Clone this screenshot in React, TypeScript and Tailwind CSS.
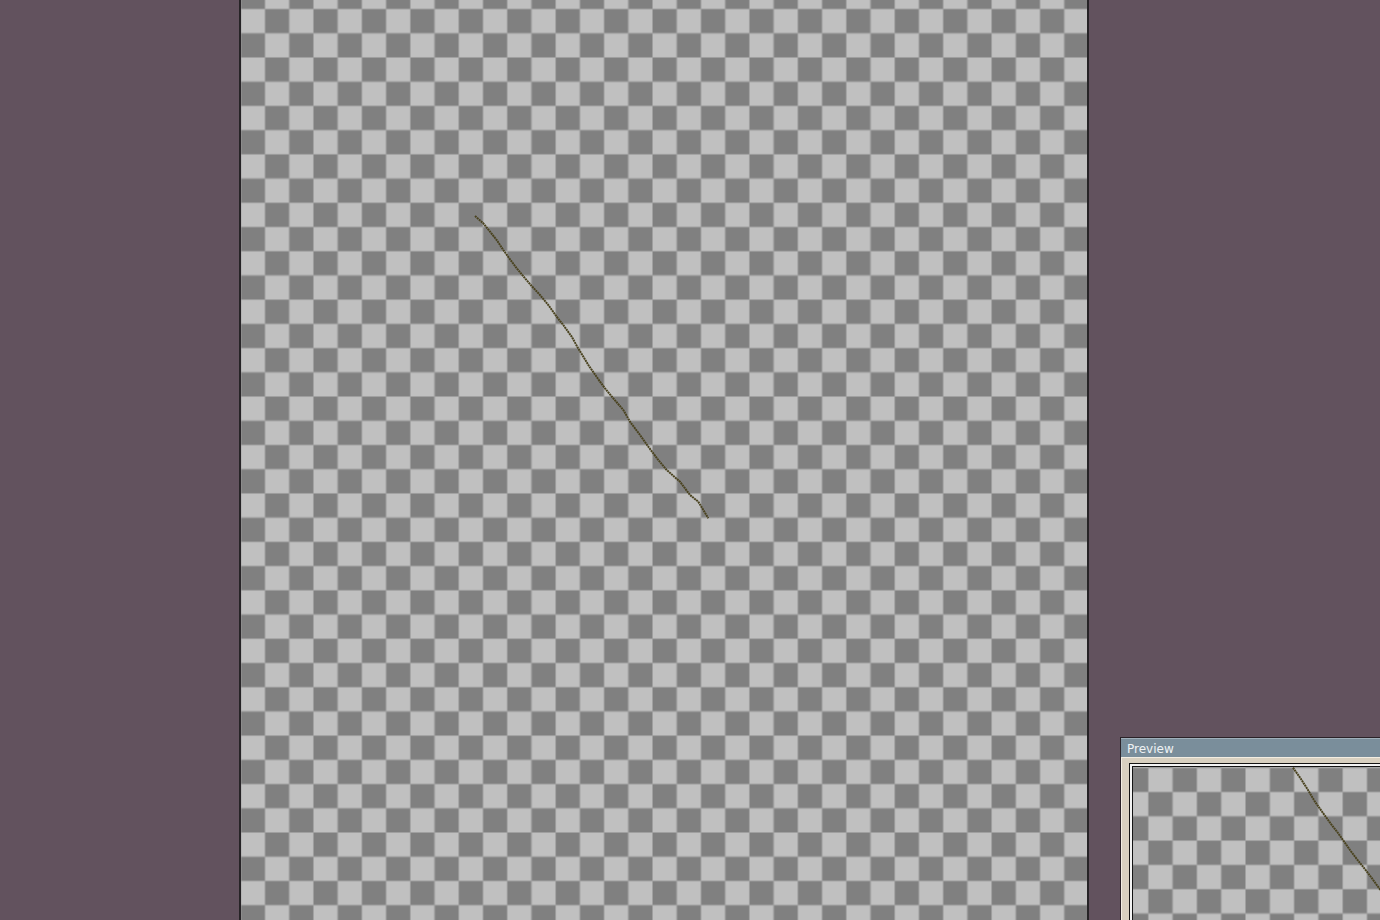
import React from "react";

const mainPts =
  "475,216 483.3,223.3 490,231.7 496.7,240 503.3,250 510,259.3 516.7,268.3 525,278.3 531.7,286 540,295 548.3,305 556.7,316.7 563.3,325 571.7,336.7 578,348 589,366 600,381.7 605,388.3 613.3,398.3 623.3,410 630,421.7 640,435 648.3,446.7 658.3,460 666.7,470 680,481.7 690,495 698.3,501.7 708.3,518.3";

function CheckerPattern({ id, s, x, y }: { id: string; s: number; x: number; y: number }) {
  const d = s * 2;
  return (
    <pattern id={id} patternUnits="userSpaceOnUse" x={x} y={y} width={d} height={d}>
      <rect x={0} y={0} width={s} height={s} fill="#808080" />
      <rect x={s} y={0} width={s} height={s} fill="#c0c0c0" />
      <rect x={0} y={s} width={s} height={s} fill="#c0c0c0" />
      <rect x={s} y={s} width={s} height={s} fill="#808080" />
      <rect x={s - 0.5} y={0} width={1} height={d} fill="#a0a0a0" />
      <rect x={0} y={0} width={0.5} height={d} fill="#a0a0a0" />
      <rect x={d - 0.5} y={0} width={0.5} height={d} fill="#a0a0a0" />
      <rect x={0} y={s - 0.5} width={d} height={1} fill="#a0a0a0" />
      <rect x={0} y={0} width={d} height={0.5} fill="#a0a0a0" />
      <rect x={0} y={d - 0.5} width={d} height={0.5} fill="#a0a0a0" />
    </pattern>
  );
}

function MainCanvas() {
  const pts = mainPts
    .split(" ")
    .map((p) => {
      const [px, py] = p.split(",").map(Number);
      return `${(px - 241).toFixed(1)},${py}`;
    })
    .join(" ");
  return (
    <svg width={846} height={920} className="block">
      <defs>
        <CheckerPattern id="chkMain" s={24.22} x={-0.22} y={-15.2} />
      </defs>
      <rect x={0} y={0} width={846} height={920} fill="url(#chkMain)" />
      <polyline
        points={pts}
        fill="none"
        stroke="#4a4320"
        strokeWidth={2}
        strokeDasharray="2 0.6"
        strokeLinejoin="round"
      />
    </svg>
  );
}

function PreviewCanvas() {
  const pts = "160,0.7 168,12 175,23 182,34.7 190,46 198,57 205,66 210,73 217,83 223,91 230,99.7 238,110 245,119.7 252,129 258,138";
  return (
    <svg width={300} height={200} className="block">
      <defs>
        <CheckerPattern id="chkPrev" s={24.3} x={-9} y={0.7} />
      </defs>
      <rect x={0} y={0} width={300} height={200} fill="url(#chkPrev)" />
      <polyline
        points={pts}
        fill="none"
        stroke="#4a4320"
        strokeWidth={2}
        strokeDasharray="2 0.6"
        strokeLinejoin="round"
      />
    </svg>
  );
}

export default function App() {
  return (
    <div className="flex h-[920px] w-[1380px] overflow-hidden bg-[#62525e]">
      <div className="w-[239px] shrink-0" />
      <div className="w-[850px] shrink-0 border-x-2 border-[#262326] h-[920px] overflow-hidden">
        <MainCanvas />
      </div>
      <div className="flex-1 min-w-0 overflow-visible">
        <div className="ml-[31px] mt-[737px] w-[330px] border border-[#2a2228] bg-[#d8d0c0]">
          <div className="h-[19px] bg-[#7a8e9b] border-t border-[#9fb0bb] pl-[6px] pt-[4px]">
            <span
              className="block text-[12px] leading-[12px] text-[#eef2f4]"
              style={{ fontFamily: '"DejaVu Sans", sans-serif' }}
            >
              Preview
            </span>
          </div>
          <div className="border-l border-t border-[#f2ede2] pl-[7px] pt-[5px]">
            <div className="border border-[#141414]">
              <div className="border-2 border-[#f4f4f4]">
                <div className="border border-[#141414]">
                  <PreviewCanvas />
                </div>
              </div>
            </div>
          </div>
        </div>
      </div>
    </div>
  );
}
